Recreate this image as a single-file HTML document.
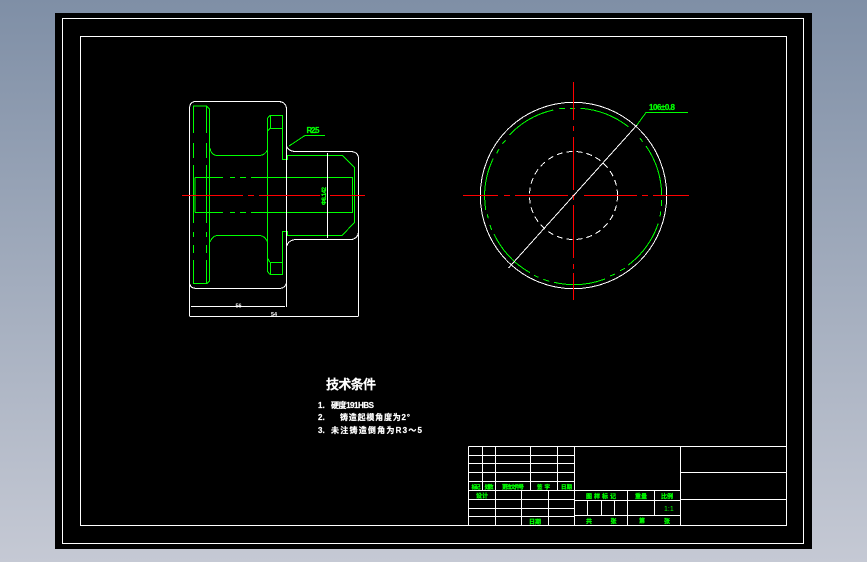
<!DOCTYPE html>
<html><head><meta charset="utf-8"><style>
html,body{margin:0;padding:0;width:867px;height:562px;overflow:hidden;background:linear-gradient(#7f8fa6,#c5c9d4)}
svg{position:absolute;left:0;top:0}
text{font-family:"Liberation Sans","Noto Sans CJK SC",sans-serif;font-weight:700}
.g text{fill:#0f0;stroke:#0f0;stroke-width:.25;font-size:6px}
.t text{fill:#fff;stroke:#fff;stroke-width:.2;font-size:8px}
path,circle,rect{shape-rendering:crispEdges}
.w{fill:none;stroke:#fff;stroke-width:1}
.n{fill:none;stroke:#0f0;stroke-width:1}
.r{fill:none;stroke:#f00;stroke-width:1}
</style></head><body>
<svg width="867" height="562" viewBox="0 0 867 562">
<rect x="55" y="13" width="757" height="536" fill="#000"/>
<rect class="w" x="62.5" y="18.5" width="741" height="525"/>
<rect class="w" x="80.5" y="36.5" width="706" height="489"/>

<!-- section view: green -->
<g class="n">
<path d="M193.5 133V106H206.5L209.5 109V281L207 283.5H193.5V260"/>
<path d="M193.5 143V158M193.5 165V223M193.5 232V237M193.5 245V253"/>
<path d="M206.5 106V133M206.5 143V158M206.5 165V223M206.5 232V237M206.5 245V253M206.5 260V283.5"/>
<path d="M210 148Q211 155 217 155.5H260Q265 155 267.5 150"/>
<path d="M210 242Q213 235.5 217 235.5H260Q265 236 267.5 242"/>
<path d="M267.5 118V272M267.5 118L270 115.5M267.5 131L270 128.5M267.5 258L270 262.5M267.5 271.5L270 274.5"/>
<rect x="270.5" y="115.5" width="12" height="13"/>
<rect x="270.5" y="262.5" width="12" height="12"/>
<path d="M282.5 115.5V159.5H287.5V155.5H342.5L354.5 167.5V222.5L342 235.5H287.5V231.5H282.5V274"/>
<path d="M195 177.5H223M230 177.5H235M240 177.5H246M251 177.5H353M195 212.5H223M230 212.5H235M240 212.5H246M251 212.5H353"/>
<path d="M195 177.5V212.5M352.5 177.5V212.5"/>
<path d="M289 146L305 135.5H325"/>
</g>
<g class="w">
<path d="M195 101.5H279Q285.5 102 286.5 108V146Q288 151 295 151.5H351Q358 152 358.5 158V232Q358 238 352 239.5H296Q288 240 286.5 247V283Q285 288 280 288.5H196Q190 288 189.5 283V108Q190 102 195 101.5Z"/>
<path d="M286.5 108V307M189.5 283V316.5M358.5 232V316.5M191 306.5H285M190 316.5H358M327.5 153V238"/>
</g>
<path class="r" d="M182 195.5H243M248 195.5H254M259 195.5H320M330 195.5H365"/>

<!-- circle view -->
<circle class="w" cx="573.5" cy="195.5" r="93.2"/>
<path class="n" d="M509.3 135A88.3 88.3 0 0 1 553.3 110M559.3 108.7A88.3 88.3 0 0 1 565 108.3M570 108.3A88.3 88.3 0 0 1 575 108.3M580.7 108.3A88.3 88.3 0 0 1 628.3 126.7M640 138.3A88.3 88.3 0 0 1 642.7 141.7M646 146A88.3 88.3 0 0 1 661.7 195M661.7 200A88.3 88.3 0 0 1 661.7 206M660.7 211.7A88.3 88.3 0 0 1 660 216.7M658.3 223.3A88.3 88.3 0 0 1 628.3 265M625 268.3A88.3 88.3 0 0 1 620 270.7M615 274A88.3 88.3 0 0 1 610 276M605 279A88.3 88.3 0 0 1 554 282.3M549.3 281.3A88.3 88.3 0 0 1 543.3 279.3M538.3 277.3A88.3 88.3 0 0 1 534 275.3M530 272.7A88.3 88.3 0 0 1 494 234M491.7 230A88.3 88.3 0 0 1 490 225M488.3 218.3A88.3 88.3 0 0 1 487.3 214.3M485.7 210A88.3 88.3 0 0 1 493.3 158.3M496.7 153.3A88.3 88.3 0 0 1 499 149M502.3 144A88.3 88.3 0 0 1 505.7 140"/>
<circle class="w" cx="573.5" cy="195.5" r="44" stroke-dasharray="6 4"/>
<path class="r" d="M463 195.5H498M504 195.5H510M515 195.5H568M572 195.5H575M584 195.5H637M642 195.5H648M653 195.5H689M573.5 82V120M573.5 126V131M573.5 137V190M573.5 195V200M573.5 205V258M573.5 264V269M573.5 273V300"/>
<path class="w" d="M508.5 268L637 125"/>
<path class="n" d="M637 125L646 112.5H688"/>

<!-- title block -->
<g class="w">
<path d="M468.5 446.5H786.5M468.5 446.5V525.5M468.5 525.5H786.5"/>
<path d="M482.5 446.5V490.5M495.5 446.5V525.5M530.5 446.5V490.5M557.5 446.5V490.5M574.5 446.5V525.5M680.5 446.5V525.5"/>
<path d="M468.5 455.5H574.5M468.5 463.5H574.5M468.5 472.5H574.5M468.5 481.5H574.5M468.5 490.5H680.5M468.5 499.5H574.5M468.5 508.5H574.5M468.5 516.5H574.5"/>
<path d="M521.5 490.5V525.5M548.5 490.5V525.5"/>
<path d="M574.5 500.5H680.5M574.5 515.5H680.5M627.5 490.5V525.5M654.5 490.5V515.5M587.5 500.5V515.5M601.5 500.5V515.5M614.5 500.5V515.5"/>
<path d="M680.5 472.5H786.5M680.5 499.5H786.5"/>
</g>
<g class="g">
<text x="471.5" y="489" style="font-size:5.5px" textLength="9">标记</text>
<text x="484.5" y="489" style="font-size:5.5px" textLength="9">处数</text>
<text x="502" y="489" style="font-size:5.5px" textLength="22">更改文件号</text>
<text x="537" y="489" style="font-size:5.5px" textLength="13">签 字</text>
<text x="561" y="489" style="font-size:5.5px" textLength="11">日期</text>
<text x="476" y="498" textLength="12">设 计</text>
<text x="529" y="524" textLength="12">日 期</text>
<text x="586" y="498.5" textLength="30">图样标记</text>
<text x="635" y="498.5" textLength="12">重 量</text>
<text x="661" y="498.5" textLength="12">比 例</text>
<text x="664" y="511" style="font-size:7px;font-weight:400;stroke-width:0">1:1</text>
<text x="586" y="523.5">共</text>
<text x="610.5" y="523.5">张</text>
<text x="639" y="523">第</text>
<text x="664" y="523.5">张</text>
<text x="306.5" y="133" style="font-size:8px" textLength="13">R2.5</text>
<text x="649" y="110" style="font-size:8px" textLength="26">106±0.8</text>
<text transform="translate(326,205) rotate(-90)" textLength="18">Φ8.142</text>
</g>
<text x="235.5" y="307.5" fill="#fff" style="font-size:5.5px">56</text>
<text x="271" y="316" fill="#fff" style="font-size:5.5px">54</text>
<!-- notes -->
<g class="t">
<text x="326" y="389" style="font-size:13px" textLength="50">技术条件</text>
<text x="318" y="408">1.</text>
<text x="331" y="408" textLength="43">硬度191HBS</text>
<text x="318" y="420">2.</text>
<text x="340" y="420" textLength="70">铸造起模角度为2°</text>
<text x="318" y="433">3.</text>
<text x="331" y="433" textLength="91">未注铸造倒角为R3～5</text>
</g>
</svg>
</body></html>
